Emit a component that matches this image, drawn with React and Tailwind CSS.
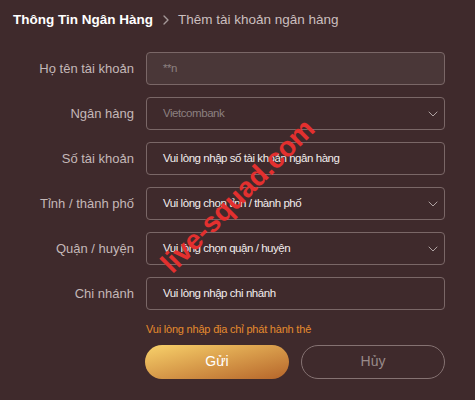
import React from 'react';
import { ChevronDown, ChevronRight } from 'lucide-react';

const font = { fontFamily: '"Liberation Sans", Arial, sans-serif' };

function Row({ label, children }) {
  return (
    <div className="flex items-center">
      <label className="w-[122px] shrink-0 text-right text-[13px] text-[#c4b8b8]">{label}</label>
      <div className="ml-3 w-[299px]">{children}</div>
    </div>
  );
}

function Field({ value, muted, disabled, select }) {
  return (
    <div
      className={`h-[33px] flex items-center justify-between rounded border border-[#7a6767] pl-4 pr-[3px] text-[11.5px] tracking-[-0.45px] ${
        disabled ? 'bg-[#4a3738]' : 'bg-transparent'
      } ${muted ? 'text-[#8c8080]' : 'text-[#f2eded]'}`}
    >
      <span>{value}</span>
      {select && <ChevronDown size={16} strokeWidth={1.4} className="text-[#b8acac]" />}
    </div>
  );
}

export default function App() {
  return (
    <div style={font} className="relative w-[475px] h-[400px] overflow-hidden bg-[#3f2a2c]">
      {/* breadcrumb */}
      <div className="flex items-center h-[40px] pl-[13px] text-[13.5px]">
        <span className="font-bold text-white">Thông Tin Ngân Hàng</span>
        <ChevronRight size={16} strokeWidth={2} className="ml-[5px] mr-[4px] text-[#a59999]" />
        <span className="text-[#cbbfbf]">Thêm tài khoản ngân hàng</span>
      </div>

      <div className="pl-3 pt-3 flex flex-col gap-3">
        <Row label="Họ tên tài khoản">
          <Field value="**n" muted disabled />
        </Row>
        <Row label="Ngân hàng">
          <Field value="Vietcombank" muted select />
        </Row>
        <Row label="Số tài khoản">
          <Field value="Vui lòng nhập số tài khoản ngân hàng" />
        </Row>
        <Row label="Tỉnh / thành phố">
          <Field value="Vui lòng chọn tỉnh / thành phố" select />
        </Row>
        <Row label="Quận / huyện">
          <Field value="Vui lòng chọn quận / huyện" select />
        </Row>
        <Row label="Chi nhánh">
          <Field value="Vui lòng nhập chi nhánh" />
        </Row>
      </div>

      <div className="ml-[146px] mt-[11px] text-[11px] tracking-[-0.2px] text-[#e58a2e]">Vui lòng nhập địa chỉ phát hành thẻ</div>

      <div className="ml-[145px] mt-[7px] flex gap-3">
        <button className="w-[144px] h-[34px] rounded-full bg-gradient-to-br from-[#f8d26b] to-[#b5652a] text-white text-[14px]">
          Gửi
        </button>
        <button className="w-[144px] h-[34px] rounded-full border border-[#857272] text-[#998a8a] text-[14px]">
          Hủy
        </button>
      </div>

      {/* watermark */}
      <div className="absolute left-[238px] top-[196px] -translate-x-1/2 -translate-y-1/2 -rotate-45 whitespace-nowrap text-[28px] font-bold text-[#e3302f] pointer-events-none">
        live-squad.com
      </div>
    </div>
  );
}
